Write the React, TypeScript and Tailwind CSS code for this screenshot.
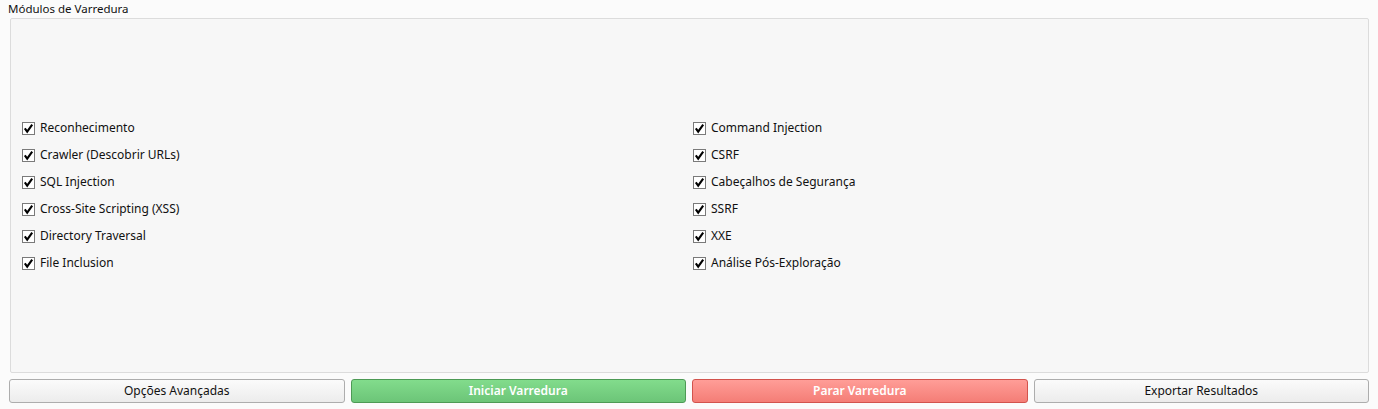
import React from "react";

const left = [
  "Reconhecimento",
  "Crawler (Descobrir URLs)",
  "SQL Injection",
  "Cross-Site Scripting (XSS)",
  "Directory Traversal",
  "File Inclusion",
];

const right = [
  "Command Injection",
  "CSRF",
  "Cabeçalhos de Segurança",
  "SSRF",
  "XXE",
  "Análise Pós-Exploração",
];

function Check({ label }: { label: string }) {
  return (
    <label className="flex items-center h-[27px] gap-[5px]">
      <span className="w-[13px] h-[13px] border border-[#7a7a7a] bg-white flex items-center justify-center">
        <svg width="11" height="11" viewBox="0 0 11 11">
          <path d="M1.8 5.3 L4.2 8.6 L9.2 1.6" fill="none" stroke="#000" strokeWidth="2.1" />
        </svg>
      </span>
      <span className="text-[12px] text-[#111]">{label}</span>
    </label>
  );
}

export default function App() {
  return (
    <div
      className="w-[1378px] h-[409px] bg-[#fbfbfb] flex flex-col"
      style={{ fontFamily: '"Noto Sans", "Open Sans", sans-serif' }}
    >
      <div className="px-[8px] h-[18px] text-[11.5px] leading-[17px] text-[#111]">Módulos de Varredura</div>

      <div className="ml-[10px] mr-[9px] h-[355px] border border-[#dcdcdc] rounded-[2px] bg-[#f7f7f7] flex items-center pl-[11px]">
        <div className="grid grid-cols-[671px_1fr] w-full">
          <div className="flex flex-col">
            {left.map((l) => (
              <Check key={l} label={l} />
            ))}
          </div>
          <div className="flex flex-col">
            {right.map((l) => (
              <Check key={l} label={l} />
            ))}
          </div>
        </div>
      </div>

      <div className="mt-[6px] ml-[9px] mr-[9px] grid grid-cols-4 gap-[6px] text-[12px]">
        <button className="h-[24px] rounded-[3px] border border-[#adadad] bg-gradient-to-b from-[#fbfbfb] to-[#ececec] text-[#111]">
          Opções Avançadas
        </button>
        <button className="h-[24px] rounded-[3px] border border-[#4d9a55] bg-gradient-to-b from-[#82dc8c] to-[#6cc578] text-white font-semibold">
          Iniciar Varredura
        </button>
        <button className="h-[24px] rounded-[3px] border border-[#d2534d] bg-gradient-to-b from-[#ff9d97] to-[#f47d76] text-white font-semibold">
          Parar Varredura
        </button>
        <button className="h-[24px] rounded-[3px] border border-[#adadad] bg-gradient-to-b from-[#fbfbfb] to-[#ececec] text-[#111]">
          Exportar Resultados
        </button>
      </div>
    </div>
  );
}
